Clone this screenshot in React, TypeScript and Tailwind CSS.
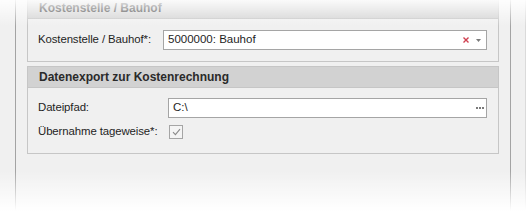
import React from "react";

const FONT = "font-['Liberation_Sans',_Arial,_sans-serif]";

function Field({
  label,
  labelW,
  children,
}: {
  label: string;
  labelW: string;
  children: React.ReactNode;
}) {
  return (
    <div className="flex h-[20px] items-center">
      <div className={`${labelW} shrink-0 whitespace-nowrap text-[11.4px] tracking-[-0.1px] text-[#1e1e1e]`}>{label}</div>
      {children}
    </div>
  );
}

export default function App() {
  return (
    <div className={`relative h-[211px] w-[526px] overflow-hidden bg-[#f0f0f0] ${FONT}`}>
      <div className="flex h-full">
        <div className="w-[15px] shrink-0" />
        <div className="flex-1 border-x border-[#a3a3a3] px-[11px]">
          {/* Kostenstelle / Bauhof */}
          <div className="-mt-[2px] border-x border-b border-[#c6c6c6]">
            <div className="flex h-[21px] items-center whitespace-nowrap border-b border-[#c6c6c6] bg-[#d2d2d2] pl-[11px] text-[12px] font-bold text-[#2a2a2a]">
              Kostenstelle / Bauhof
            </div>
            <div className="pb-[11px] pl-[10px] pr-[11px] pt-[11px]">
              <Field label="Kostenstelle / Bauhof*:" labelW="w-[125px]">
                <div className="flex h-[20px] flex-1 items-center border border-[#a5a5a5] bg-white pl-[4px] pr-[5px]">
                  <span className="flex-1 text-[11.5px] text-[#1e1e1e]">5000000: Bauhof</span>
                  <svg width="6" height="6" viewBox="0 0 6 6" className="mr-[7px]">
                    <path d="M0.5 0.5 L5.5 5.5 M5.5 0.5 L0.5 5.5" stroke="#d04050" strokeWidth="1.4" />
                  </svg>
                  <svg width="5" height="3" viewBox="0 0 5 3">
                    <path d="M0 0 H5 L2.5 3 Z" fill="#7a7a7a" />
                  </svg>
                </div>
              </Field>
            </div>
          </div>

          {/* Datenexport */}
          <div className="mt-[4px] border border-[#c6c6c6]">
            <div className="flex h-[21px] items-center whitespace-nowrap border-b border-[#c6c6c6] bg-[#d2d2d2] pl-[11px] text-[12px] font-bold text-[#2a2a2a]">
              Datenexport zur Kostenrechnung
            </div>
            <div className="flex flex-col gap-[4px] pb-[11px] pl-[10px] pr-[11px] pt-[10px]">
              <Field label="Dateipfad:" labelW="w-[130px]">
                <div className="flex h-[20px] flex-1 items-center border border-[#a5a5a5] bg-white pl-[4px] pr-[2px]">
                  <span className="flex-1 text-[11.5px] text-[#1e1e1e]">C:\</span>
                  <div className="flex gap-[1px]">
                    <span className="h-[2px] w-[2px] bg-[#7a7a7a]" />
                    <span className="h-[2px] w-[2px] bg-[#7a7a7a]" />
                    <span className="h-[2px] w-[2px] bg-[#7a7a7a]" />
                  </div>
                </div>
              </Field>
              <Field label="Übernahme tageweise*:" labelW="w-[131px]">
                <div className="flex h-[14px] w-[14px] items-center justify-center border border-[#a5a5a5] bg-[#f4f4f4]">
                  <svg width="9" height="8" viewBox="0 0 9 8">
                    <path d="M1 4.2 L3.4 6.6 L8 1.2" fill="none" stroke="#8a8a8a" strokeWidth="1.1" />
                  </svg>
                </div>
              </Field>
            </div>
          </div>
        </div>
        <div className="w-[15px] shrink-0 border-r border-[#dadada]" />
      </div>

      <div className="pointer-events-none absolute inset-x-0 top-0 h-[26px] bg-gradient-to-b from-white/90 to-white/0" />
      <div className="pointer-events-none absolute inset-x-0 bottom-0 h-[40px] bg-gradient-to-b from-white/0 to-white" />
    </div>
  );
}
